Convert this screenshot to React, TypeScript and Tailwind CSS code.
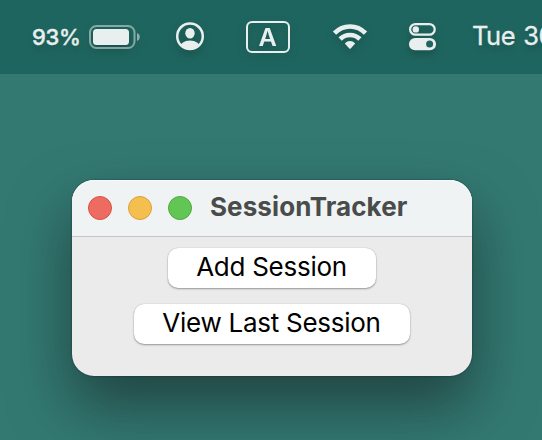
import type { ReactNode } from "react";

const INK = "#e8efee";

function MenuIcon({ viewBox, className, children }: { viewBox: string; className: string; children: ReactNode }) {
  return (
    <svg viewBox={viewBox} className={`h-[74px] shrink-0 drop-shadow-[0_4px_4px_rgba(0,0,0,0.2)] ${className}`} fill="none">
      {children}
    </svg>
  );
}

function MenuBar() {
  return (
    <header className="flex h-[74px] items-start overflow-hidden bg-[#1f655f] pl-8 whitespace-nowrap text-[#e8efee]">
      <span className="mt-[21px] w-14 shrink-0 text-[22px] leading-8 font-medium tracking-[-0.3px] [-webkit-text-stroke:0.4px_#e8efee] [text-shadow:0_4px_6px_rgba(0,0,0,0.2)]">
        93%
      </span>
      <MenuIcon viewBox="88 0 54 74" className="w-[54px]">
        <rect x="90" y="26" width="44.5" height="22" rx="6.5" stroke={INK} strokeOpacity="0.5" strokeWidth="2" />
        <rect x="93" y="29" width="36" height="16" rx="3.5" fill={INK} />
        <path d="M137 33c3.7 1.3 3.7 6.7 0 8z" fill={INK} fillOpacity="0.55" />
      </MenuIcon>
      <MenuIcon viewBox="175 0 30 74" className="ml-[33px] w-[30px]">
        <clipPath id="account">
          <circle cx="190" cy="36.3" r="13" />
        </clipPath>
        <circle cx="190" cy="36.3" r="12.8" stroke={INK} strokeWidth="2.5" />
        <ellipse cx="190" cy="33.3" rx="4.7" ry="5.3" fill={INK} />
        <ellipse cx="190" cy="48" rx="10.5" ry="7.5" fill={INK} clipPath="url(#account)" />
      </MenuIcon>
      <span className="mt-[21px] ml-[41px] flex h-8 w-11 shrink-0 items-center justify-center rounded-md border-2 border-[#e8efee] pt-0.5 text-[24px] leading-none font-semibold drop-shadow-[0_4px_4px_rgba(0,0,0,0.2)]">
        <span className="scale-x-105">A</span>
      </span>
      <MenuIcon viewBox="332 0 36 74" className="ml-[42px] w-9">
        <path d="M334.5 33.2C343 24.2 357 24.2 365.5 33.2" stroke={INK} strokeWidth="4.6" />
        <path d="M340.1 39C345.5 33.6 354.5 33.6 359.9 39" stroke={INK} strokeWidth="4.6" />
        <path d="M344.8 43.5C347.7 40.2 352.3 40.2 355.2 43.5L350.7 48.4Q350 49.1 349.3 48.4Z" fill={INK} />
      </MenuIcon>
      <MenuIcon viewBox="408 0 29 74" className="ml-10 w-[29px]">
        <rect x="410.1" y="24.1" width="24.6" height="10.6" rx="5.3" stroke={INK} strokeWidth="2.2" />
        <circle cx="415.8" cy="29.4" r="3.2" fill={INK} />
        <rect x="409" y="38" width="27" height="12.3" rx="6.1" fill={INK} />
        <circle cx="429.6" cy="44" r="3.5" fill="#1f655f" />
      </MenuIcon>
      <span className="mt-5 ml-[35px] shrink-0 text-[25.5px] leading-8 tracking-[-0.5px] [word-spacing:1.5px] [-webkit-text-stroke:0.3px_#e8efee] [text-shadow:0_4px_6px_rgba(0,0,0,0.2)]">
        Tue 30
      </span>
    </header>
  );
}

function PushButton({ className, children }: { className: string; children: ReactNode }) {
  return (
    <button
      className={`flex h-10 items-center justify-center rounded-[10px] bg-white pr-px pb-0.5 text-[26px] leading-8 tracking-[-0.27px] whitespace-nowrap text-black shadow-[0_1px_2px_rgba(0,0,0,0.35),0_0_1px_rgba(0,0,0,0.25)] ${className}`}
    >
      {children}
    </button>
  );
}

export default function App() {
  return (
    <div className="h-[440px] w-[542px] overflow-hidden bg-[#337972] font-['Inter','Liberation_Sans',sans-serif]">
      <MenuBar />
      <main className="mt-[106px] ml-[72px] h-[196px] w-[400px] rounded-[22px] bg-[#ebebeb] shadow-[0_0_2px_rgba(0,0,0,0.5),0_30px_60px_rgba(22,34,34,0.6)]">
        <div className="flex h-[57px] items-center rounded-t-[22px] border-b border-[#c2c5c5] bg-[#eff3f4] pl-4 shadow-[inset_0_1px_0_#f8fafa]">
          <div className="flex gap-4">
            <i className="size-6 rounded-full border border-[#d95046] bg-[#ed6b60]" />
            <i className="size-6 rounded-full border border-[#d8a13c] bg-[#f5bf50]" />
            <i className="size-6 rounded-full border border-[#50a73c] bg-[#62c655]" />
          </div>
          <h1 className="-mt-0.5 ml-[18px] text-[26px] leading-8 font-bold tracking-[0.1px] text-[#4a4b4b]">SessionTracker</h1>
        </div>
        <div className="flex flex-col items-center gap-4 pt-[11px]">
          <PushButton className="w-[208px]">Add Session</PushButton>
          <PushButton className="w-[276px]">View Last Session</PushButton>
        </div>
      </main>
    </div>
  );
}
